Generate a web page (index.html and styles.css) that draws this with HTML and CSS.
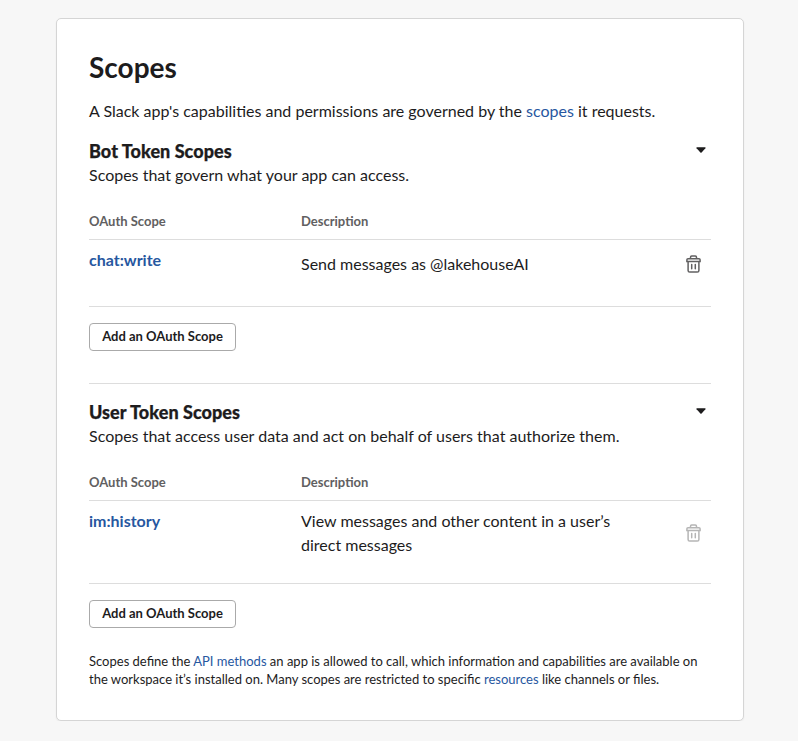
FILE: index.html
```html
<!DOCTYPE html>
<html lang="en">
<head>
<meta charset="utf-8">
<title>Scopes</title>
<link rel="stylesheet" href="styles.css">
</head>
<body>
<main class="card">
  <h1>Scopes</h1>
  <p class="intro">A Slack app's capabilities and permissions are governed by the <a href="#">scopes</a> it requests.</p>
  <section class="group">
    <header class="group-head">
      <h2>Bot Token Scopes</h2>
      <svg class="caret" viewBox="0 0 10 6"><path d="M1 .2h8q1 .2.4 1L5.600 5.500q-.6.5-1.200 0L.6 1.200Q0 .4 1 .2z"/></svg>
    </header>
    <p class="sub">Scopes that govern what your app can access.</p>
    <div class="row labels"><span>OAuth Scope</span><span>Description</span></div>
    <div class="row item bot">
      <a class="scope" href="#">chat:write</a>
      <p class="desc">Send messages as @lakehouseAI</p>
      <svg class="trash" viewBox="0 0 15 18"><path d="M4.500 3.700V2.300q0-1.200 1.200-1.200h3.600q1.200 0 1.200 1.200v1.400M2 3.700h11q1.100 0 1.100 1.100v1.700H.9V4.800Q.9 3.700 2 3.700zM2.100 6.500v9q0 1.600 1.600 1.600h7.600q1.600 0 1.600-1.600v-9M5.700 9.500v4.300M9.300 9.500v4.300"/></svg>
    </div>
    <button class="add">Add an OAuth Scope</button>
  </section>
  <section class="group user">
    <header class="group-head">
      <h2>User Token Scopes</h2>
      <svg class="caret" viewBox="0 0 10 6"><path d="M1 .2h8q1 .2.4 1L5.600 5.500q-.6.5-1.200 0L.6 1.200Q0 .4 1 .2z"/></svg>
    </header>
    <p class="sub">Scopes that access user data and act on behalf of users that authorize them.</p>
    <div class="row labels"><span>OAuth Scope</span><span>Description</span></div>
    <div class="row item im">
      <a class="scope" href="#">im:history</a>
      <p class="desc">View messages and other content in a user’s<br>direct messages</p>
      <svg class="trash faded" viewBox="0 0 15 18"><path d="M4.500 3.700V2.300q0-1.200 1.200-1.200h3.600q1.200 0 1.200 1.200v1.400M2 3.700h11q1.100 0 1.100 1.100v1.700H.9V4.800Q.9 3.700 2 3.700zM2.100 6.500v9q0 1.600 1.600 1.600h7.600q1.600 0 1.600-1.600v-9M5.700 9.500v4.300M9.300 9.500v4.300"/></svg>
    </div>
    <button class="add">Add an OAuth Scope</button>
  </section>
  <p class="note">Scopes define the <a href="#">API methods</a> an app is allowed to call, which information and capabilities are available on<br>the workspace it’s installed on. Many scopes are restricted to specific <a href="#">resources</a> like channels or files.</p>
</main>
</body>
</html>
```
FILE: styles.css
```css
* { box-sizing: border-box; margin: 0; padding: 0; }
body { background: #f7f7f7; color: #1d1c1d; font: 16px/24px Lato, sans-serif; padding: 18px 54px 0 56px; }
a { color: #27579f; text-decoration: none; }
.card { height: 703px; background: #fff; border: 1px solid #d5d5d5; border-radius: 5px; padding: 30px 32px 0; box-shadow: 0 1px 2px rgba(0, 0, 0, .06); }
h1 { font-size: 28px; line-height: 36px; font-weight: 700; }
.intro { margin-top: 14px; white-space: nowrap; }
.group { height: 245px; margin-top: 16px; border-bottom: 1px solid #ddd; }
.group-head { display: flex; justify-content: space-between; height: 24px; padding-right: 5px; }
h2 { font-family: "Lato Black", Lato, sans-serif; font-size: 18px; line-height: 24px; font-weight: 900; letter-spacing: .05px; -webkit-text-stroke: .25px #1d1c1d; }
.caret { width: 10px; height: 6px; margin-top: 8px; fill: #1d1c1d; }
.sub { white-space: nowrap; }
.row { display: grid; grid-template-columns: 212px 1fr 15px; padding-right: 10px; border-bottom: 1px solid #ddd; }
.labels { height: 30px; margin-top: 23px; font-size: 13px; line-height: 22px; font-weight: 700; color: #616061; }
.item { height: 67px; }
.scope { font-weight: 700; margin-top: 8px; }
.desc { margin-top: 12px; }
.trash { width: 15px; height: 18px; margin-top: 15px; fill: none; stroke: #616061; stroke-width: 1.5; stroke-linecap: round; }
.faded { stroke: #b5b5b5; }
.add { display: block; width: 147px; height: 28px; margin-top: 16px; padding-bottom: 2px; background: #fff; border: 1px solid #aaa; border-radius: 4px; color: #1d1c1d; font: 700 13px/24px Lato, sans-serif; }
.im { height: 83px; }
.im .desc { margin-top: 8px; }
.im .trash { margin-top: 23px; }
.user { height: 228px; border: 0; }
.note { margin-top: 24px; font-size: 13px; line-height: 18px; white-space: nowrap; }
```
